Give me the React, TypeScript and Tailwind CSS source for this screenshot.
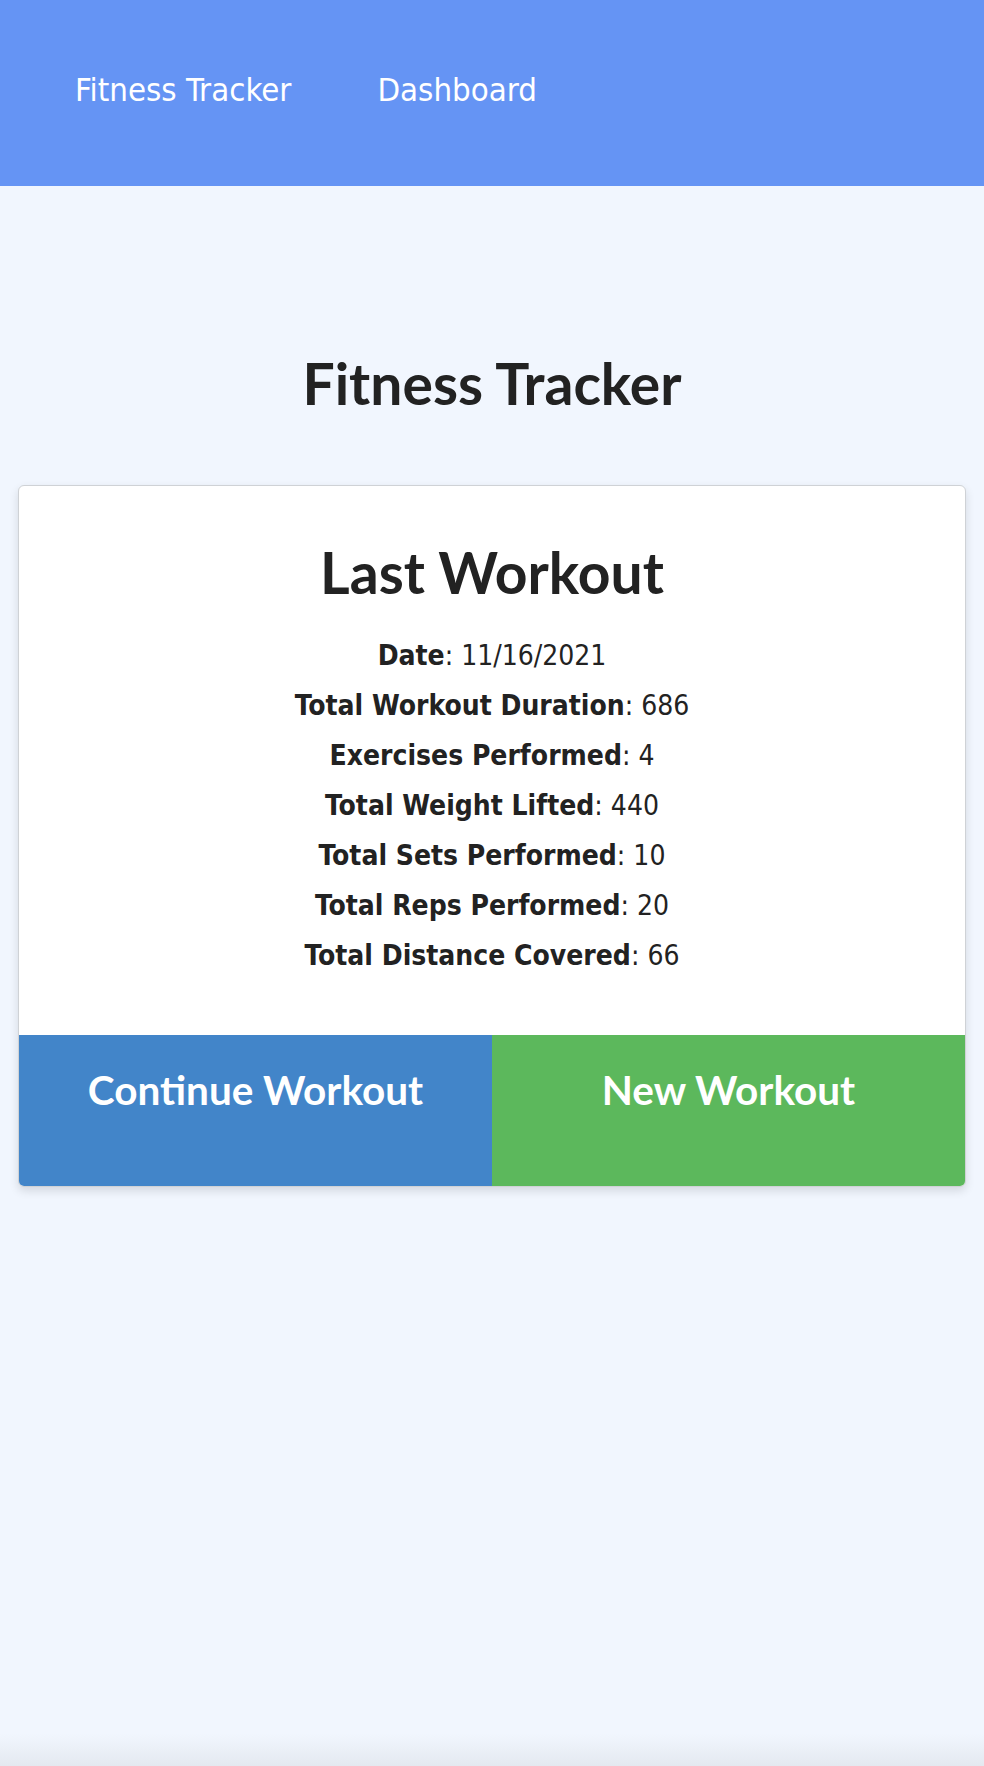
import React from "react";

type Stat = {
    label: string;
    value: string;
};

const stats: Stat[] = [
    { label: "Date", value: "11/16/2021" },
    { label: "Total Workout Duration", value: "686" },
    { label: "Exercises Performed", value: "4" },
    { label: "Total Weight Lifted", value: "440" },
    { label: "Total Sets Performed", value: "10" },
    { label: "Total Reps Performed", value: "20" },
    { label: "Total Distance Covered", value: "66" },
];

function NavBar() {
    return (
        <nav className="h-[186px] bg-[#6594f4] flex items-start pl-[75px] pt-[68px] gap-[86px] text-white text-[32.7px] leading-[44px] [font-family:'DejaVu_Sans_Condensed','DejaVu_Sans',sans-serif] [font-stretch:condensed]">
            <a href="#">Fitness Tracker</a>
            <a href="#">Dashboard</a>
        </nav>
    );
}

function LastWorkout() {
    return (
        <div className="mx-[18px] mt-[68px] bg-white border border-[#cfd2d6] rounded-md shadow-[0_4px_10px_rgba(0,0,0,0.12)] overflow-hidden">
            <div className="pt-[52px] pb-[54px] text-center text-[#222]">
                <h2 className="[font-family:Lato,sans-serif] font-bold text-[57px] leading-[68px]">Last Workout</h2>
                <div className="mt-[25px] [font-family:'DejaVu_Sans_Condensed','DejaVu_Sans',sans-serif] [font-stretch:condensed] text-[28px] leading-[50px]">
                    {stats.map((s) => (
                        <p key={s.label}>
                            <strong className="font-bold">{s.label}</strong>: {s.value}
                        </p>
                    ))}
                </div>
            </div>
            <div className="grid grid-cols-2 h-[151px] text-white [font-family:Lato,sans-serif] font-bold text-[40.5px] leading-[63px] text-center">
                <button className="bg-[#4285c9] pt-[23px] flex justify-center items-start">Continue Workout</button>
                <button className="bg-[#5cb85c] pt-[23px] flex justify-center items-start">New Workout</button>
            </div>
        </div>
    );
}

export default function App() {
    return (
        <div className="min-h-screen flex flex-col bg-[#f1f6fe] text-[#222]">
            <NavBar />
            <h1 className="mt-[163px] text-center [font-family:Lato,sans-serif] font-bold text-[57px] leading-[68px]">Fitness Tracker</h1>
            <LastWorkout />
            <div className="mt-auto h-[32px] bg-gradient-to-b from-[#f1f6fe] to-[#e4e9f0]" />
        </div>
    );
}
